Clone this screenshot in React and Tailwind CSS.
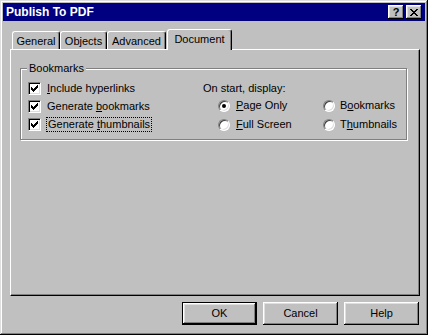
import React from "react";

function Check() {
  const px = [
    [6,0],[5,1],[6,1],[0,2],[4,2],[5,2],[6,2],[0,3],[1,3],[3,3],[4,3],[5,3],
    [0,4],[1,4],[2,4],[3,4],[4,4],[1,5],[2,5],[3,5],[2,6],
  ];
  return (
    <svg width="7" height="7" viewBox="0 0 7 7" shapeRendering="crispEdges">
      {px.map(([x, y], i) => (
        <rect key={i} x={x} y={y} width="1" height="1" fill="#000" />
      ))}
    </svg>
  );
}

function Checkbox() {
  return (
    <div className="w-[13px] h-[13px] bg-white flex items-center justify-center border-t border-l border-t-[#808080] border-l-[#808080] border-r border-b border-r-white border-b-white shadow-[inset_1px_1px_#000,inset_-1px_-1px_#dfdfdf] shrink-0">
      <Check />
    </div>
  );
}

function Radio({ on }) {
  return (
    <div className="w-[12px] h-[12px] rounded-full bg-white border border-t-[#808080] border-l-[#808080] border-r-white border-b-white shadow-[inset_1px_1px_#404040,inset_-1px_-1px_#dfdfdf] flex items-center justify-center shrink-0">
      {on && <div className="w-[4px] h-[4px] rounded-full bg-black" />}
    </div>
  );
}

function U({ children }) {
  return <span className="underline underline-offset-[1px]">{children}</span>;
}

function Tab({ children, w, selected, className = "" }) {
  if (selected) {
    return (
      <div
        className={`relative z-10 h-[21px] -mb-[1px] bg-[#c0c0c0] border-l border-t border-white border-r border-r-black rounded-t-[3px] shadow-[inset_-1px_0_#808080] flex items-start justify-center pt-[3px] ${w} ${className}`}
      >
        {children}
      </div>
    );
  }
  return (
    <div
      className={`h-[18px] bg-[#c0c0c0] border-l border-t border-white border-r border-r-black rounded-t-[3px] shadow-[inset_-1px_0_#808080] flex items-start justify-center pt-[3px] ${w} ${className}`}
    >
      {children}
    </div>
  );
}

function Btn({ children, def }) {
  if (def) {
    return (
      <div className="w-[75px] h-[23px] border border-black">
        <div className="w-full h-full flex items-center justify-center shadow-[inset_-1px_-1px_#000,inset_1px_1px_#fff,inset_-2px_-2px_#808080,inset_2px_2px_#dfdfdf]">
          {children}
        </div>
      </div>
    );
  }
  return (
    <div className="w-[75px] h-[23px] flex items-center justify-center shadow-[inset_-1px_-1px_#000,inset_1px_1px_#fff,inset_-2px_-2px_#808080,inset_2px_2px_#dfdfdf]">
      {children}
    </div>
  );
}

export default function App() {
  return (
    <div className="w-[428px] h-[335px] bg-[#c0c0c0] p-[3px] flex flex-col font-['Liberation_Sans',Arial,sans-serif] text-[11px] leading-[13px] text-black shadow-[inset_-1px_-1px_#000,inset_1px_1px_#dfdfdf,inset_-2px_-2px_#808080,inset_2px_2px_#fff] overflow-hidden">
      {/* Title bar */}
      <div className="h-[18px] bg-[#000080] flex items-center pl-[3px] pr-[3px] shrink-0">
        <span className="text-white font-bold text-[12px] leading-[14px]">Publish To PDF</span>
        <div className="ml-auto flex gap-[2px]">
          <div className="w-[16px] h-[14px] bg-[#c0c0c0] flex items-center justify-center font-bold text-[11px] leading-none shadow-[inset_-1px_-1px_#000,inset_1px_1px_#fff,inset_-2px_-2px_#808080,inset_2px_2px_#dfdfdf]">
            ?
          </div>
          <div className="w-[16px] h-[14px] bg-[#c0c0c0] flex items-center justify-center shadow-[inset_-1px_-1px_#000,inset_1px_1px_#fff,inset_-2px_-2px_#808080,inset_2px_2px_#dfdfdf]">
            <svg width="8" height="7" viewBox="0 0 8 7" shapeRendering="crispEdges">
              <path d="M0 0h2v1h-2zM6 0h2v1h-2zM1 1h2v1h-2zM5 1h2v1h-2zM2 2h4v1h-4zM3 3h2v1h-2zM2 4h4v1h-4zM1 5h2v1h-2zM5 5h2v1h-2zM0 6h2v1h-2zM6 6h2v1h-2z" fill="#000" />
            </svg>
          </div>
        </div>
      </div>

      {/* Tabs + panel */}
      <div className="flex flex-col pl-[7px] pr-[5px] pt-[8px]">
        <div className="flex items-end h-[20px]">
          <Tab w="w-[48px]" className="ml-[2px]">General</Tab>
          <Tab w="w-[47px]">Objects</Tab>
          <Tab w="w-[59px]">Advanced</Tab>
          <Tab w="w-[65px]" selected className="ml-[1px]">Document</Tab>
        </div>
        <div className="h-[247px] border-l border-t border-white border-r border-b border-r-black border-b-black shadow-[inset_-1px_-1px_#808080] pl-[9px] pt-[18px]">
          {/* group box */}
          <div className="relative w-[387px] h-[72px] border border-[#808080] shadow-[inset_1px_1px_#fff,1px_1px_#fff] flex">
            <div className="absolute left-[6px] -top-[7px] bg-[#c0c0c0] px-[2px]">Bookmarks</div>
            <div className="w-[182px] pl-[7px] pt-[10px] flex flex-col">
              <div className="h-[18px] flex items-center gap-[5px]">
                <Checkbox />
                <span className="px-[1px]"><U>I</U>nclude hyperlinks</span>
              </div>
              <div className="h-[18px] flex items-center gap-[5px]">
                <Checkbox />
                <span className="px-[1px]">Generate <U>b</U>ookmarks</span>
              </div>
              <div className="h-[18px] flex items-center gap-[5px]">
                <Checkbox />
                <span className="px-[1px] border border-dotted border-black -my-[1px]">Generate <U>t</U>humbnails</span>
              </div>
            </div>
            <div className="flex flex-col pt-[11px]">
              <div className="h-[16px] flex items-center">On start, display:</div>
              <div className="h-[19px] flex items-center pl-[15px]">
                <div className="w-[105px] flex items-center gap-[6px]">
                  <Radio on />
                  <span><U>P</U>age Only</span>
                </div>
                <div className="flex items-center gap-[5px]">
                  <Radio />
                  <span>B<U>o</U>okmarks</span>
                </div>
              </div>
              <div className="h-[19px] flex items-center pl-[15px]">
                <div className="w-[105px] flex items-center gap-[6px]">
                  <Radio />
                  <span><U>F</U>ull Screen</span>
                </div>
                <div className="flex items-center gap-[5px]">
                  <Radio />
                  <span>T<U>h</U>umbnails</span>
                </div>
              </div>
            </div>
          </div>
        </div>
      </div>

      {/* Buttons */}
      <div className="flex justify-end gap-[6px] pr-[6px] mt-[6px]">
        <Btn def>OK</Btn>
        <Btn>Cancel</Btn>
        <Btn>Help</Btn>
      </div>
    </div>
  );
}
